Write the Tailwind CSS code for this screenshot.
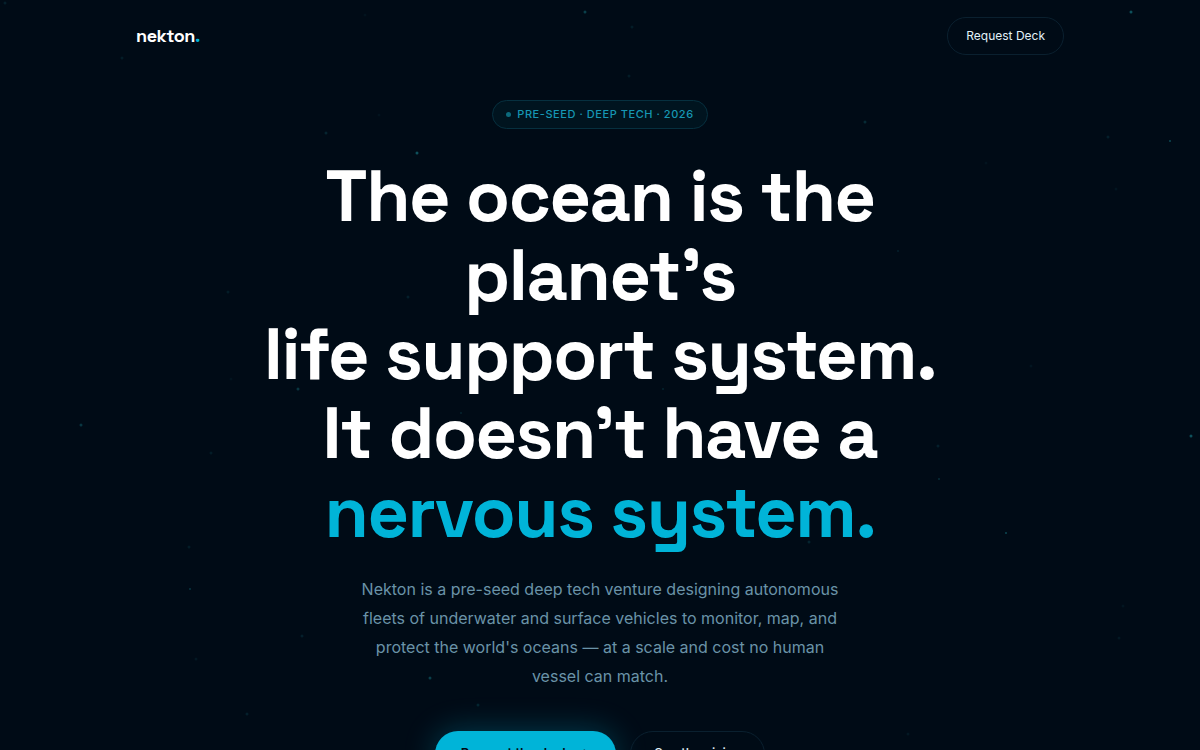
<!DOCTYPE html>
<html lang="en">
<head>
  <meta charset="UTF-8">
  <meta name="viewport" content="width=device-width, initial-scale=1.0">
  <title>Nekton</title>
  <script src="https://cdn.jsdelivr.net/npm/@tailwindcss/browser@4"></script>
</head>
<body class="relative min-h-screen overflow-x-hidden bg-[#000b16] font-['Inter',sans-serif] text-white">
  <!-- Plankton -->
  <div id="particles" class="absolute inset-0 overflow-hidden pointer-events-none" aria-hidden="true"></div>

  <!-- Nav -->
  <header class="relative">
    <nav class="max-w-5xl mx-auto px-12 pt-[17px] flex justify-between items-center">
      <a href="#" class="font-['Space_Grotesk','Inter',sans-serif] text-lg leading-6 font-bold tracking-tight">nekton<span class="text-[#00b4d8]">.</span></a>
      <a href="#deck" class="h-[38px] px-[18px] flex items-center rounded-full border border-[#0a202f] text-xs text-[#e2f1f8]">Request Deck</a>
    </nav>
  </header>

  <!-- Hero -->
  <main class="relative flex flex-col items-center px-6 pt-[45px] pb-24 text-center">
    <p class="h-[29px] px-[13px] flex items-center gap-[6px] rounded-full border border-[#06303f] bg-[#00141f] text-[11px] font-medium tracking-wider text-[#1697b4]">
      <span class="size-[5px] rounded-full bg-[#0c6a7c]"></span>
      PRE-SEED · DEEP TECH · 2026
    </p>

    <h1 class="mt-7 max-w-3xl font-['Space_Grotesk','Inter',sans-serif] text-[72px] leading-[79px] font-bold tracking-[-0.02em]">
      The ocean is the<br>planet’s<br>
      life support system.<br>
      It doesn’t have a<br>
      <span class="text-[#00b4d8]">nervous system.</span>
    </h1>

    <p class="mt-[23px] max-w-[500px] text-base leading-[29px] text-[#6a93a8]">
      Nekton is a pre-seed deep tech venture designing autonomous fleets of underwater and surface vehicles to monitor, map, and protect the world's oceans — at a scale and cost no human vessel can match.
    </p>

    <div class="mt-10 flex gap-[14px]">
      <a href="#deck" class="h-[46px] px-[26px] flex items-center gap-2 rounded-full bg-[#00b4d8] text-[13px] font-semibold text-[#000a14] shadow-[0_0_32px_rgba(0,180,216,0.3)]">Request the deck <span>→</span></a>
      <a href="#vision" class="h-[46px] px-[23px] flex items-center rounded-full border border-[#0a202f] text-[13px] font-medium text-[#e2f1f8]">See the vision</a>
    </div>
  </main>

  <script>
    // x, y, size, opacity
    const particles = [
      [1131, 12, 3, 0.4], [585, 12, 3, 0.3], [5, 3, 3, 0.12], [122, 58, 3, 0.1],
      [326, 133, 3, 0.15], [417, 153, 3, 0.4], [865, 122, 3, 0.18], [1108, 137, 3, 0.12],
      [1170, 141, 2, 0.35], [986, 163, 3, 0.05], [1116, 189, 3, 0.06], [898, 251, 2, 0.12],
      [228, 292, 3, 0.1], [408, 297, 3, 0.12], [298, 389, 3, 0.25], [81, 425, 3, 0.25],
      [211, 453, 3, 0.1], [1191, 436, 3, 0.4], [938, 446, 3, 0.12], [939, 479, 2, 0.2],
      [1006, 533, 2, 0.35], [809, 542, 3, 0.15], [189, 547, 3, 0.1], [190, 589, 2, 0.25],
      [302, 636, 3, 0.12], [196, 659, 3, 0.08], [247, 714, 3, 0.12], [1123, 606, 3, 0.06],
      [1119, 638, 3, 0.08], [430, 678, 3, 0.3], [478, 705, 3, 0.15], [908, 734, 3, 0.08],
      [632, 27, 3, 0.1], [629, 76, 3, 0.1], [461, 413, 2, 0.15], [663, 389, 2, 0.15],
      [1031, 366, 3, 0.06], [231, 379, 3, 0.05], [365, 15, 3, 0.05], [379, 115, 3, 0.05],
    ];

    document.getElementById("particles").innerHTML = particles.map(([x, y, size, opacity]) => `
      <span class="absolute rounded-full bg-[#22b8c4] -translate-x-1/2 -translate-y-1/2" style="left:${x / 12}%;top:${y}px;width:${size}px;height:${size}px;opacity:${opacity}"></span>
    `).join("");
  </script>
</body>
</html>
